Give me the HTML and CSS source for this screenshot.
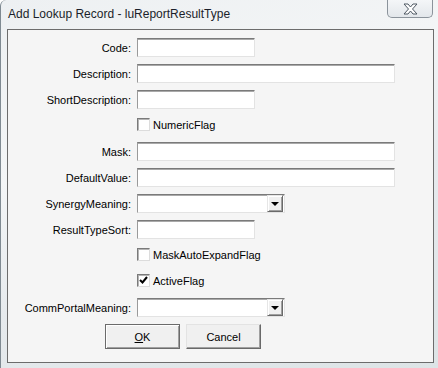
FILE: index.html
```html
<!DOCTYPE html>
<html lang="en">
  <head>
    <meta charset="UTF-8" />
    <title>Add Lookup Record</title>
    <link rel="stylesheet" href="styles.css">
  </head>
  <body>
    <div class="window">
      <div class="titlebar">
        <span class="title">Add Lookup Record - luReportResultType</span>
        <div class="close">
          <svg width="15" height="12" viewBox="0 0 15 12">
            <path d="M1 1 H5 L7.5 4 L10 1 H14 L9.5 6 L14 11 H10 L7.5 8 L5 11 H1 L5.5 6 Z" fill="#fff" stroke="#4e5863" stroke-width="1" stroke-linejoin="round" />
          </svg>
        </div>
      </div>
      <div class="client">
        <div class="row">
          <label class="label">Code:</label>
          <input class="field short" type="text">
        </div>
        <div class="row">
          <label class="label">Description:</label>
          <input class="field long" type="text">
        </div>
        <div class="row">
          <label class="label">ShortDescription:</label>
          <input class="field short" type="text">
        </div>
        <div class="row check-row">
          <span class="check"></span>
          <span class="check-text">NumericFlag</span>
        </div>
        <div class="row">
          <label class="label">Mask:</label>
          <input class="field long" type="text">
        </div>
        <div class="row">
          <label class="label">DefaultValue:</label>
          <input class="field long" type="text">
        </div>
        <div class="row">
          <label class="label">SynergyMeaning:</label>
          <div class="field combo">
            <div class="combo-btn"><span class="arrow"></span></div>
          </div>
        </div>
        <div class="row">
          <label class="label">ResultTypeSort:</label>
          <input class="field short" type="text">
        </div>
        <div class="row check-row">
          <span class="check"></span>
          <span class="check-text">MaskAutoExpandFlag</span>
        </div>
        <div class="row check-row">
          <span class="check">
            <svg width="11" height="11" viewBox="0 0 11 11">
              <path d="M2 5 L4.5 7.5 L9 2" fill="none" stroke="#000" stroke-width="2" />
            </svg>
          </span>
          <span class="check-text">ActiveFlag</span>
        </div>
        <div class="row">
          <label class="label">CommPortalMeaning:</label>
          <div class="field combo">
            <div class="combo-btn"><span class="arrow"></span></div>
          </div>
        </div>
        <div class="buttons">
          <button class="btn btn-default"><u>O</u>K</button>
          <button class="btn">Cancel</button>
        </div>
      </div>
    </div>
  </body>
</html>
```

FILE: styles.css
```css
body {
  margin: 0;
  font-family: "Liberation Sans", Arial, sans-serif;
  font-size: 11px;
  color: #000;
}
.window {
  width: 438px;
  height: 368px;
  box-sizing: border-box;
  display: flex;
  flex-direction: column;
  border-left: 1px solid #7f8a92;
  border-top-left-radius: 6px;
  background: linear-gradient(160deg, #edf0f2 0%, #f3f5f6 35%, #e6eaed 60%, #dde4e6 100%);
}
.titlebar {
  height: 29px;
  display: flex;
  justify-content: space-between;
  align-items: flex-start;
}
.title {
  padding: 7px 0 0 7px;
  font-size: 12px;
  line-height: 14px;
  color: #1b1f2a;
}
.close {
  width: 46px;
  height: 18px;
  margin-right: 5px;
  box-sizing: border-box;
  border: 1px solid #8b939b;
  border-top: none;
  border-radius: 0 0 5px 5px;
  background: linear-gradient(#f4f6f8, #e3e7eb);
  display: flex;
  justify-content: center;
  align-items: center;
}
.client {
  flex: 1;
  margin: 0 4px 5px 6px;
  padding-top: 8px;
  background: #f5f5f5;
  border: 1px solid #6c6c6c;
}
.row {
  display: flex;
  align-items: center;
  height: 19px;
  margin-bottom: 7px;
}
.label {
  width: 123px;
  margin-right: 6px;
  text-align: right;
  white-space: nowrap;
}
.field {
  height: 19px;
  box-sizing: border-box;
  margin: 0;
  padding: 0 2px;
  background: #fff;
  border: 1px solid;
  border-color: #7a7a7a #e3e3e3 #e3e3e3 #9a9a9a;
  box-shadow: inset 0 1px 0 #a9a9a9;
  font: inherit;
  outline: none;
}
.short {
  width: 118px;
}
.long {
  width: 258px;
}
.combo {
  width: 148px;
  padding: 0 1px 0 0;
  display: flex;
  justify-content: flex-end;
}
.combo-btn {
  width: 16px;
  height: 17px;
  box-sizing: border-box;
  background: #f0f0f0;
  border: 1px solid;
  border-color: #e6e6e6 #6a6a6a #6a6a6a #e6e6e6;
  box-shadow: inset 1px 1px 0 #fff, inset -1px -1px 0 #a0a0a0;
  display: flex;
  justify-content: center;
  align-items: center;
}
.arrow {
  width: 0;
  height: 0;
  margin-top: 1px;
  border-left: 4px solid transparent;
  border-right: 4px solid transparent;
  border-top: 4px solid #000;
}
.check-row {
  height: 17px;
  margin-bottom: 9px;
  padding-left: 129px;
}
.check {
  width: 13px;
  height: 13px;
  box-sizing: border-box;
  margin-right: 3px;
  background: #fff;
  border: 1px solid;
  border-color: #7a7a7a #dcdcdc #dcdcdc #7a7a7a;
  box-shadow: inset 1px 1px 0 #b4b4b4;
  display: flex;
  justify-content: center;
  align-items: center;
}
.buttons {
  display: flex;
  gap: 6px;
  margin: 7px 0 0 97px;
}
.btn {
  width: 75px;
  height: 25px;
  padding: 0;
  font: inherit;
  color: #000;
  background: #f0f0f0;
  border: 1px solid;
  border-color: #e3e3e3 #696969 #696969 #e3e3e3;
  box-shadow: inset -1px -1px 0 #a0a0a0;
}
.btn-default {
  border-color: #6b6b6b;
  box-shadow: inset 1px 1px 0 #fff, inset -1px -1px 0 #a0a0a0;
}
```
